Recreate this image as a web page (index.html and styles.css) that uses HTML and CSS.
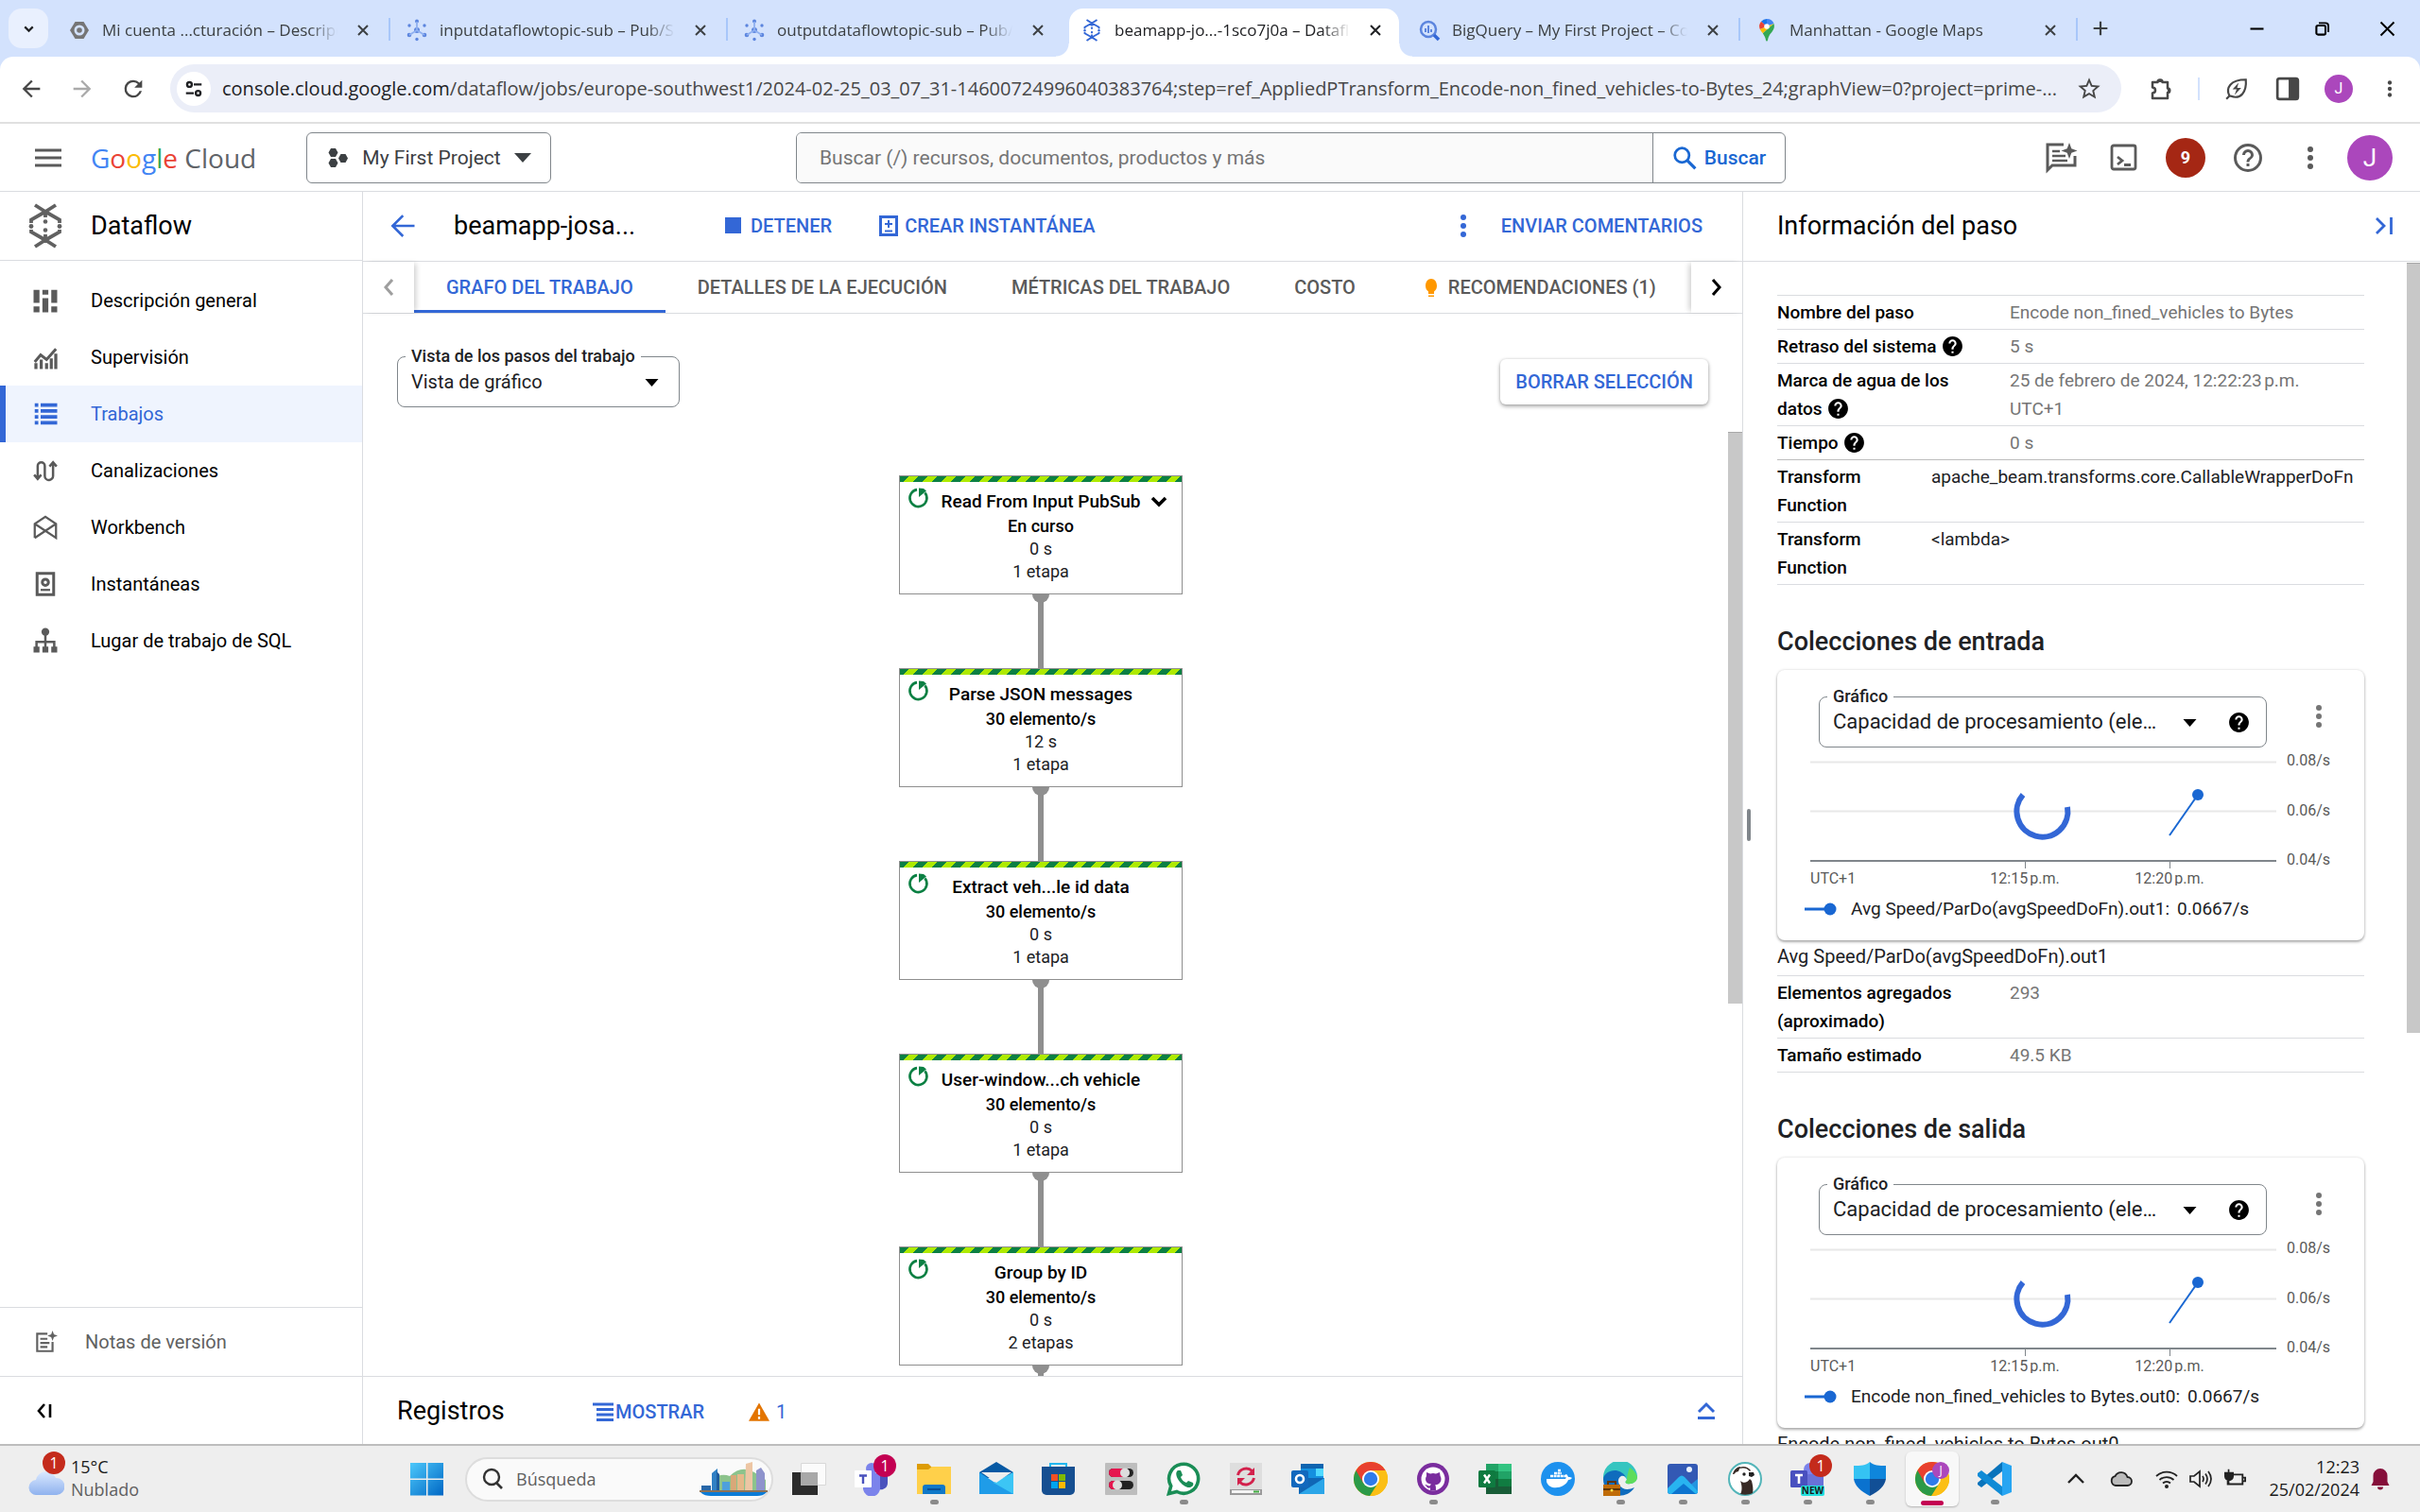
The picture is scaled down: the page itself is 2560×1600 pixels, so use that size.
FILE: index.html
```html
<!DOCTYPE html>
<html lang="es">
<head>
<meta charset="utf-8">
<title>beamapp-jo...-1sco7j0a – Dataflow</title>
<link rel="stylesheet" href="styles.css">
</head>
<body>
<svg class="defs" aria-hidden="true">
  <symbol id="i-x" viewBox="0 0 24 24"><path d="M6 6l12 12M18 6L6 18" fill="none" stroke="currentColor" stroke-width="2.4"/></symbol>
  <symbol id="i-dots" viewBox="0 0 24 24"><circle cx="12" cy="6" r="2"/><circle cx="12" cy="12" r="2"/><circle cx="12" cy="18" r="2"/></symbol>
  <symbol id="i-help" viewBox="0 0 24 24"><path d="M12 2C6.48 2 2 6.48 2 12s4.480 10 10 10 10-4.480 10-10S17.520 2 12 2zm1 17h-2v-2h2v2zm2.070-7.750l-.9.920C13.450 12.900 13 13.500 13 15h-2v-.5c0-1.100.45-2.100 1.170-2.830l1.240-1.260c.37-.36.59-.86.59-1.410 0-1.100-.9-2-2-2s-2 .9-2 2H8c0-2.210 1.790-4 4-4s4 1.790 4 4c0 .88-.36 1.680-.93 2.250z"/></symbol>
  <symbol id="i-pubsub" viewBox="0 0 24 24"><g fill="#5c85de"><circle cx="12" cy="12" r="3"/><circle cx="12" cy="2.500" r="2"/><circle cx="4" cy="17" r="2.300"/><circle cx="20" cy="17" r="2.300"/><circle cx="4" cy="7" r="1.700"/><circle cx="20" cy="7" r="1.700"/><circle cx="12" cy="21.500" r="1.700"/></g><path d="M12 3v9l-8 5m8-5l8 5" stroke="#8fb0f0" stroke-width="1.800" fill="none"/></symbol>
  <symbol id="i-dataflow" viewBox="0 0 36 48"><g fill="none" stroke="currentColor" stroke-width="3.800"><path d="M7 2l11 7 11-7M7 46l11-7 11 7M18 9L3 17.500V21M18 9l15 8.500V21M18 39L3 30.500V28M18 39l15-8.500V28M18 8v7M18 40v-7"/></g><g fill="currentColor"><circle cx="18" cy="19.500" r="2.300"/><circle cx="18" cy="28.500" r="2.300"/><circle cx="3" cy="24.500" r="2.400"/><circle cx="33" cy="24.500" r="2.400"/></g></symbol>
  <symbol id="i-chrome" viewBox="0 0 36 36"><circle cx="18" cy="18" r="18" fill="#fbbc05"/><path d="M18 18L2.400 9A18 18 0 0 0 17 36l9-14z" fill="#2b9a48"/><path d="M18 9h15.600A18 18 0 0 0 2.400 9L10.200 22.500 18 18z" fill="#e8402f"/><path d="M18 9h15.600A18 18 0 0 1 17.500 36l8.300-13.500L18 18z" fill="#fbbf15"/><circle cx="18" cy="18" r="9" fill="#fff"/><circle cx="18" cy="18" r="7.200" fill="#2f7bea"/></symbol>
  <symbol id="i-running" viewBox="0 0 24 24"><path d="M15.500 4.200A9 9 0 1 1 6.500 4.800" transform="rotate(25 12 12)" fill="none" stroke="currentColor" stroke-width="2.600"/><path d="M12 1.500V11l8-6.500-3-2.500z" fill="currentColor"/></symbol>
</svg>

<header class="tabstrip">
  <button class="tabsearch" aria-label="Buscar pestañas"><svg viewBox="0 0 24 24"><path d="M6 9l6 6 6-6" fill="none" stroke="currentColor" stroke-width="3"/></svg></button>
  <nav class="btabs">
    <div class="btab sep"><svg class="fav" viewBox="0 0 24 24"><path d="M7.500 3h9L22 12l-5.500 9h-9L2 12z" fill="#757575"/><circle cx="12" cy="12" r="5.500" fill="#d3e2fd"/><circle cx="12" cy="12" r="2.800" fill="#757575"/></svg><span class="bt">Mi cuenta ...cturación – Descripción</span><button aria-label="Cerrar"><svg><use href="#i-x"/></svg></button></div>
    <div class="btab sep"><svg class="fav"><use href="#i-pubsub"/></svg><span class="bt">inputdataflowtopic-sub – Pub/Sub</span><button aria-label="Cerrar"><svg><use href="#i-x"/></svg></button></div>
    <div class="btab"><svg class="fav"><use href="#i-pubsub"/></svg><span class="bt">outputdataflowtopic-sub – Pub/Sub</span><button aria-label="Cerrar"><svg><use href="#i-x"/></svg></button></div>
    <div class="btab on"><svg class="fav"><use href="#i-dataflow"/></svg><span class="bt">beamapp-jo...-1sco7j0a – Dataflow</span><button aria-label="Cerrar"><svg><use href="#i-x"/></svg></button></div>
    <div class="btab sep"><svg class="fav" viewBox="0 0 24 24"><circle cx="11" cy="11" r="8" fill="none" stroke="#5c85de" stroke-width="2.500"/><path d="M17 17l5 5" stroke="#3367d6" stroke-width="3.500"/><path d="M8 10v4M11 7v8M14 11v3" stroke="#5c85de" stroke-width="2"/></svg><span class="bt">BigQuery – My First Project – Consola</span><button aria-label="Cerrar"><svg><use href="#i-x"/></svg></button></div>
    <div class="btab sep"><svg class="fav" viewBox="0 0 24 24"><path d="M12 0a8 8 0 0 0-6 2.800L12 8z" fill="#1a73e8"/><path d="M6 2.800A8 8 0 0 0 4.800 11L12 8z" fill="#ea4335"/><path d="M12 0a8 8 0 0 1 7.500 5L12 8z" fill="#4285f4"/><path d="M4.800 11c.8 1.700 2 3 3 4.300L19.500 5 12 8z" fill="#fbbc04"/><path d="M19.500 5c1 3 .3 5.500-1.500 8-2 2.600-4 4.500-5 9.500-.3 1.500-1.700 1.500-2 0-.6-3-1.800-5-3.200-7.200z" fill="#34a853"/><circle cx="12" cy="8" r="2.800" fill="#fff"/></svg><span class="bt">Manhattan - Google Maps</span><button aria-label="Cerrar"><svg><use href="#i-x"/></svg></button></div>
  </nav>
  <button class="newtab" aria-label="Nueva pestaña"><svg viewBox="0 0 24 24"><path d="M12 4v16M4 12h16" stroke="currentColor" stroke-width="2.400"/></svg></button>
  <div class="winbtns">
    <button aria-label="Minimizar"><svg viewBox="0 0 24 24"><path d="M4 12h16" stroke="currentColor" stroke-width="2.400"/></svg></button>
    <button aria-label="Restaurar"><svg viewBox="0 0 24 24"><rect x="5" y="8" width="11" height="11" rx="2" fill="none" stroke="currentColor" stroke-width="2.400"/><path d="M8 5h8a3.500 3.500 0 0 1 3.500 3.500V16" fill="none" stroke="currentColor" stroke-width="2.200"/></svg></button>
    <button aria-label="Cerrar ventana"><svg viewBox="0 0 24 24"><path d="M4 4l16 16M20 4L4 20" stroke="currentColor" stroke-width="2.200"/></svg></button>
  </div>
</header>

<div class="toolbar-wrap"><div class="toolbar">
  <button aria-label="Atrás"><svg viewBox="0 0 24 24"><path d="M20 11H7.830l5.590-5.590L12 4l-8 8 8 8 1.410-1.410L7.830 13H20v-2z" fill="currentColor"/></svg></button>
  <button class="dim" aria-label="Adelante"><svg viewBox="0 0 24 24"><path d="M4 11h12.170l-5.590-5.590L12 4l8 8-8 8-1.410-1.410L16.170 13H4v-2z" fill="currentColor"/></svg></button>
  <button aria-label="Recargar"><svg viewBox="0 0 24 24"><path d="M17.650 6.350A7.960 7.960 0 0 0 12 4a8 8 0 1 0 7.730 10h-2.080A6 6 0 1 1 12 6c1.660 0 3.140.69 4.220 1.780L13 11h7V4l-2.350 2.350z" fill="currentColor"/></svg></button>
  <div class="urlbar">
    <button class="tune" aria-label="Información del sitio"><svg viewBox="0 0 24 24"><g fill="none" stroke="currentColor" stroke-width="2.600"><circle cx="7" cy="7" r="2.700"/><path d="M12 7h9M3 17h9"/><circle cx="17" cy="17" r="2.700"/></g></svg></button>
    <span class="url"><b>console.cloud.google.com</b>/dataflow/jobs/europe-southwest1/2024-02-25_03_07_31-14600724996040383764;step=ref_AppliedPTransform_Encode-non_fined_vehicles-to-Bytes_24;graphView=0?project=prime-...</span>
    <button class="star" aria-label="Marcador"><svg viewBox="0 0 24 24"><path d="M22 9.240l-7.190-.62L12 2 9.190 8.630 2 9.240l5.460 4.730L5.820 21 12 17.270 18.180 21l-1.630-7.030L22 9.240zM12 15.400l-3.760 2.270 1-4.280-3.320-2.880 4.380-.38L12 6.100l1.710 4.040 4.380.38-3.320 2.880 1 4.280L12 15.400z" fill="currentColor"/></svg></button>
  </div>
  <div class="ext">
    <button aria-label="Extensiones"><svg viewBox="0 0 26 24"><path d="M4 5h5.500a2.500 2.500 0 0 1 5 0H20v6.500a2 2 0 0 1 0 4.500v6H4v-5.500c4-.5 4-5.500 0-6z" fill="none" stroke="currentColor" stroke-width="2.500" stroke-linejoin="round"/><path d="M9 5a3 3 0 0 1 6 0zM20 11a3 3 0 0 1 0 5.500z" fill="currentColor"/></svg></button>
    <i class="extsep"></i>
    <button aria-label="Ahorro"><svg viewBox="0 0 24 24"><path d="M5 19C1 11 6 3 21 3c1 12-5 20-15 16zM5 19l-3 3" fill="none" stroke="currentColor" stroke-width="2"/><path d="M14 6l-6 6.500h4L10 18l6.500-7h-4z" fill="currentColor"/></svg></button>
    <button aria-label="Panel lateral"><svg viewBox="0 0 24 24"><rect x="2" y="2" width="20" height="20" rx="2" fill="none" stroke="currentColor" stroke-width="2.500"/><path d="M13 2h9v20h-9z" fill="currentColor"/></svg></button>
    <button class="me sm" aria-label="Perfil">J</button>
    <button aria-label="Menú"><svg fill="currentColor"><use href="#i-dots"/></svg></button>
  </div>
</div></div>

<header class="gbar">
  <div class="gleft">
    <button class="burger" aria-label="Menú de navegación"><svg viewBox="0 0 28 20"><path d="M0 2h28M0 10h28M0 18h28" stroke="currentColor" stroke-width="3"/></svg></button>
    <a class="logo" href="#"><span class="g1">G</span><span class="g2">o</span><span class="g3">o</span><span class="g1">g</span><span class="g4">l</span><span class="g2">e</span> Cloud</a>
    <button class="project"><svg class="hex" viewBox="0 0 24 24"><path d="M5 2h5l2.500 4.500L10 11H5L2.500 6.500zM15.500 8h5L23 12.500 20.500 17h-5L13 12.500zM5 13h5l2.500 4.500L10 22H5l-2.500-4.500z" fill="currentColor"/></svg>My First Project<svg class="caret" viewBox="0 0 18 10"><path d="M0 0h18l-9 10z" fill="currentColor"/></svg></button>
  </div>
  <form class="gsearch">
    <input type="search" aria-label="Buscar" placeholder="Buscar (/) recursos, documentos, productos y más">
    <button type="button"><svg viewBox="0 0 24 24"><circle cx="9.500" cy="9.500" r="7" fill="none" stroke="currentColor" stroke-width="2.500"/><path d="M14.500 14.500l8 8" stroke="currentColor" stroke-width="3"/></svg>Buscar</button>
  </form>
  <div class="gright">
    <button aria-label="Gemini"><svg viewBox="0 0 36 36"><path d="M21 4H4v27l5-5h24V16" fill="none" stroke="currentColor" stroke-width="3"/><path d="M9 11h8M9 16h14M9 21h16" stroke="currentColor" stroke-width="2.600"/><path d="M27 2l2.300 6.200 6.200 2.300-6.200 2.300L27 19l-2.300-6.200-6.200-2.300 6.200-2.300z" fill="currentColor"/></svg></button>
    <button aria-label="Cloud Shell"><svg viewBox="0 0 36 36"><rect x="6" y="5" width="25" height="25" rx="2" fill="none" stroke="currentColor" stroke-width="2.800"/><path d="M12 17l5 4-5 4M19 25.500h7" fill="none" stroke="currentColor" stroke-width="2.800"/></svg></button>
    <button class="notif" aria-label="Notificaciones">9</button>
    <button aria-label="Ayuda"><svg viewBox="0 0 24 24"><path d="M11 18h2v-2h-2v2zm1-16a10 10 0 1 0 0 20 10 10 0 0 0 0-20zm0 18a8 8 0 1 1 0-16 8 8 0 0 1 0 16zm0-14a4 4 0 0 0-4 4h2c0-1.100.9-2 2-2s2 .9 2 2c0 2-3 1.750-3 5h2c0-2.250 3-2.500 3-5a4 4 0 0 0-4-4z" fill="currentColor"/></svg></button>
    <button aria-label="Más"><svg fill="currentColor"><use href="#i-dots"/></svg></button>
    <button class="me" aria-label="Cuenta">J</button>
  </div>
</header>

<div class="app">
  <aside class="side">
    <div class="side-head"><svg><use href="#i-dataflow"/></svg><h2>Dataflow</h2></div>
    <nav class="menu">
      <a href="#"><svg viewBox="0 0 24 24"><path d="M2 3h5v11H2zM2 17h5v5H2zM9.500 3h5v4h-5zM9.500 10h5v12h-5zM17 3h5v11h-5zM17 17h5v5h-5z" fill="currentColor"/></svg>Descripción general</a>
      <a href="#"><svg viewBox="0 0 24 24"><path d="M3 16l5-6 5 4 8-9" fill="none" stroke="currentColor" stroke-width="2.400"/><path d="M4 17v5M8.500 14v8M13 17v5M17 13v9M20.800 9v13" stroke="currentColor" stroke-width="2.600"/></svg>Supervisión</a>
      <a href="#" class="on"><svg viewBox="0 0 24 24"><path d="M3 3h3v3H3zM8 3h14v3H8zM3 8h3v3H3zM8 8h14v3H8zM3 13h3v3H3zM8 13h14v3H8zM3 18h3v3H3zM8 18h14v3H8z" fill="currentColor"/></svg>Trabajos</a>
      <a href="#"><svg viewBox="0 0 24 24"><path d="M5.500 18V8a3 3 0 0 1 6 0v8.500a3.500 3.500 0 0 0 7 0V5M2.500 15.500l3 3.500 3-3.500M15.500 8.500l3-3.500 3 3.500" fill="none" stroke="currentColor" stroke-width="2"/></svg>Canalizaciones</a>
      <a href="#"><svg viewBox="0 0 24 24"><path d="M3 21V9l9-6 9 6v12L3 9m18 0L3 21" fill="none" stroke="currentColor" stroke-width="1.800"/></svg>Workbench</a>
      <a href="#"><svg viewBox="0 0 24 24"><rect x="5" y="3" width="14" height="18" fill="none" stroke="currentColor" stroke-width="2.400"/><circle cx="12" cy="10.500" r="2.600" fill="none" stroke="currentColor" stroke-width="2.400"/><path d="M8 17h8" stroke="currentColor" stroke-width="1.800"/></svg>Instantáneas</a>
      <a href="#"><svg viewBox="0 0 24 24"><circle cx="12" cy="4.500" r="3.300" fill="currentColor"/><path d="M12 5v14M4.500 19v-6h15v6" fill="none" stroke="currentColor" stroke-width="2"/><path d="M2 17h5v5H2zM9.500 17h5v5h-5zM17 17h5v5h-5z" fill="currentColor"/></svg>Lugar de trabajo de SQL</a>
    </nav>
    <a class="notes" href="#"><svg viewBox="0 0 24 24"><path d="M14 4H4v17h15V12" fill="none" stroke="currentColor" stroke-width="2"/><path d="M7 9h7M7 13h9M7 17h7" stroke="currentColor" stroke-width="2"/><path d="M19 1l1.300 3.700L24 6l-3.700 1.300L19 11l-1.300-3.700L14 6l3.700-1.300z" fill="currentColor"/></svg>Notas de versión</a>
    <div class="collapse"><button aria-label="Contraer"><svg viewBox="0 0 18 18"><path d="M9 2L3 9l6 7M15 2v14" fill="none" stroke="currentColor" stroke-width="2.600"/></svg></button></div>
  </aside>

  <main class="main">
    <div class="actions">
      <button class="back" aria-label="Volver"><svg viewBox="0 0 24 24"><path d="M22 11H6l7-7-1.500-1.500L2 12l9.500 9.500L13 20l-7-7h16z" fill="currentColor"/></svg></button>
      <h1>beamapp-josa...</h1>
      <button class="txt stop"><i class="square"></i>DETENER</button>
      <button class="txt"><svg viewBox="0 0 20 22"><rect x="1.500" y="1.500" width="17" height="19" fill="none" stroke="currentColor" stroke-width="3"/><path d="M10 5v8M6 9h8M6 16.500h8" stroke="currentColor" stroke-width="2"/></svg>CREAR INSTANTÁNEA</button>
      <button class="more" aria-label="Más acciones"><svg fill="currentColor"><use href="#i-dots"/></svg></button>
      <button class="txt">ENVIAR COMENTARIOS</button>
    </div>
    <div class="tabs">
      <button class="edge l" aria-label="Anterior"><svg viewBox="0 0 12 20"><path d="M10 2L3 10l7 8" fill="none" stroke="currentColor" stroke-width="3"/></svg></button>
      <div class="tablist" role="tablist">
        <button role="tab" class="on">GRAFO DEL TRABAJO</button>
        <button role="tab">DETALLES DE LA EJECUCIÓN</button>
        <button role="tab">MÉTRICAS DEL TRABAJO</button>
        <button role="tab">COSTO</button>
        <button role="tab"><svg viewBox="0 0 24 24"><path d="M9 22h6v-1.500H9zM9 19h6v-2.500c2-1.500 3-3.500 3-6C18 6 15.500 3 12 3S6 6 6 10.500c0 2.500 1 4.500 3 6z" fill="#ff9800"/></svg>RECOMENDACIONES (1)</button>
      </div>
      <button class="edge r" aria-label="Siguiente"><svg viewBox="0 0 12 20"><path d="M2 2l7 8-7 8" fill="none" stroke="currentColor" stroke-width="3"/></svg></button>
    </div>
    <div class="viewbar">
      <div class="field view"><label for="view">Vista de los pasos del trabajo</label><select id="view"><option>Vista de gráfico</option></select><svg class="caret" viewBox="0 0 14 8"><path d="M0 0h14L7 8z"/></svg></div>
      <button class="clear">BORRAR SELECCIÓN</button>
    </div>
    <div class="graphwrap">
      <div class="graph">
        <div class="node"><svg class="st"><use href="#i-running"/></svg><h3>Read From Input PubSub<svg class="exp" viewBox="0 0 20 14"><path d="M3 3l7 7 7-7" fill="none" stroke="currentColor" stroke-width="3.500"/></svg></h3><b>En curso</b><span>0 s</span><span>1 etapa</span></div><i class="link"></i>
        <div class="node"><svg class="st"><use href="#i-running"/></svg><h3>Parse JSON messages</h3><b>30 elemento/s</b><span>12 s</span><span>1 etapa</span></div><i class="link"></i>
        <div class="node"><svg class="st"><use href="#i-running"/></svg><h3>Extract veh...le id data</h3><b>30 elemento/s</b><span>0 s</span><span>1 etapa</span></div><i class="link"></i>
        <div class="node"><svg class="st"><use href="#i-running"/></svg><h3>User-window...ch vehicle</h3><b>30 elemento/s</b><span>0 s</span><span>1 etapa</span></div><i class="link"></i>
        <div class="node"><svg class="st"><use href="#i-running"/></svg><h3>Group by ID</h3><b>30 elemento/s</b><span>0 s</span><span>2 etapas</span></div><i class="link"></i>
      </div>
      <i class="sbar"></i>
    </div>
    <div class="logs">
      <h2>Registros</h2>
      <button class="txt show"><svg viewBox="0 0 22 20"><path d="M0 2h22M4 7.500h18M4 13h18M4 18.500h18" stroke="currentColor" stroke-width="3"/></svg>MOSTRAR</button>
      <a class="warn" href="#"><svg viewBox="0 0 24 21"><path d="M12 0l12 21H0z" fill="#e37400"/><path d="M12 7v7M12 16v3" stroke="#fff" stroke-width="2.400"/></svg>1</a>
      <button class="up" aria-label="Expandir"><svg viewBox="0 0 20 20"><path d="M2 11l8-8 8 8M1 17.500h18" fill="none" stroke="currentColor" stroke-width="3"/></svg></button>
    </div>
  </main>

  <section class="panel">
    <div class="phead"><h2>Información del paso</h2><button aria-label="Ocultar panel"><svg viewBox="0 0 20 20"><path d="M2 2l8 8-8 8M17.500 1v18" fill="none" stroke="currentColor" stroke-width="2.800"/></svg></button></div>
    <div class="pbody">
      <i class="grip"></i>
      <div class="pcontent">
        <table>
          <tr><th>Nombre del paso</th><td>Encode non_fined_vehicles to Bytes</td></tr>
          <tr><th>Retraso del sistema <svg class="q"><use href="#i-help"/></svg></th><td>5 s</td></tr>
          <tr><th>Marca de agua de los datos <svg class="q"><use href="#i-help"/></svg></th><td>25 de febrero de 2024, 12:22:23&#8239;p.m. UTC+1</td></tr>
          <tr><th>Tiempo <svg class="q"><use href="#i-help"/></svg></th><td>0 s</td></tr>
        </table>
        <table class="fn">
          <tr><th>Transform Function</th><td>apache_beam.transforms.core.CallableWrapperDoFn</td></tr>
          <tr><th>Transform Function</th><td>&lt;lambda&gt;</td></tr>
        </table>

        <h2>Colecciones de entrada</h2>
        <div class="card">
          <div class="cardtop">
            <div class="field metric"><label for="m1">Gráfico</label><select id="m1"><option>Capacidad de procesamiento (ele…</option></select><svg class="caret" viewBox="0 0 14 8"><path d="M0 0h14L7 8z"/></svg><svg class="q"><use href="#i-help"/></svg></div>
            <button class="dots" aria-label="Opciones"><svg fill="currentColor"><use href="#i-dots"/></svg></button>
          </div>
          <svg class="chart" viewBox="0 0 600 146">
            <g fill="none"><path d="M16 15.500h493M16 67.500h493" stroke="#e8e8e8" stroke-width="2"/><path d="M16 120h493" stroke="#80868b" stroke-width="2"/><path d="M243.500 121v7M396.500 121v7" stroke="#80868b"/></g>
            <path d="M241 50A27 27 0 1 0 288 63" fill="none" stroke="#3367d6" stroke-width="6"/>
            <path d="M396 93l30-43" stroke="#1967d2" stroke-width="2"/><circle cx="426" cy="50" r="6" fill="#1967d2"/>
            <g class="lbl"><text x="520" y="19">0.08/s</text><text x="520" y="72">0.06/s</text><text x="520" y="124">0.04/s</text><text x="16" y="144">UTC+1</text><text x="243" y="144" text-anchor="middle">12:15&#8239;p.m.</text><text x="396" y="144" text-anchor="middle">12:20&#8239;p.m.</text></g>
          </svg>
          <div class="legend"><svg viewBox="0 0 34 14"><path d="M0 7h22" stroke="#1967d2" stroke-width="3"/><circle cx="27" cy="7" r="6.500" fill="#1967d2"/></svg><span>Avg Speed/ParDo(avgSpeedDoFn).out1:</span><span>0.0667/s</span></div>
        </div>
        <p>Avg Speed/ParDo(avgSpeedDoFn).out1</p>
        <table>
          <tr><th>Elementos agregados (aproximado)</th><td>293</td></tr>
          <tr><th>Tamaño estimado</th><td>49.5 KB</td></tr>
        </table>

        <h2>Colecciones de salida</h2>
        <div class="card">
          <div class="cardtop">
            <div class="field metric"><label for="m2">Gráfico</label><select id="m2"><option>Capacidad de procesamiento (ele…</option></select><svg class="caret" viewBox="0 0 14 8"><path d="M0 0h14L7 8z"/></svg><svg class="q"><use href="#i-help"/></svg></div>
            <button class="dots" aria-label="Opciones"><svg fill="currentColor"><use href="#i-dots"/></svg></button>
          </div>
          <svg class="chart" viewBox="0 0 600 146">
            <g fill="none"><path d="M16 15.500h493M16 67.500h493" stroke="#e8e8e8" stroke-width="2"/><path d="M16 120h493" stroke="#80868b" stroke-width="2"/><path d="M243.500 121v7M396.500 121v7" stroke="#80868b"/></g>
            <path d="M241 50A27 27 0 1 0 288 63" fill="none" stroke="#3367d6" stroke-width="6"/>
            <path d="M396 93l30-43" stroke="#1967d2" stroke-width="2"/><circle cx="426" cy="50" r="6" fill="#1967d2"/>
            <g class="lbl"><text x="520" y="19">0.08/s</text><text x="520" y="72">0.06/s</text><text x="520" y="124">0.04/s</text><text x="16" y="144">UTC+1</text><text x="243" y="144" text-anchor="middle">12:15&#8239;p.m.</text><text x="396" y="144" text-anchor="middle">12:20&#8239;p.m.</text></g>
          </svg>
          <div class="legend"><svg viewBox="0 0 34 14"><path d="M0 7h22" stroke="#1967d2" stroke-width="3"/><circle cx="27" cy="7" r="6.500" fill="#1967d2"/></svg><span>Encode non_fined_vehicles to Bytes.out0:</span><span>0.0667/s</span></div>
        </div>
        <p>Encode non_fined_vehicles to Bytes.out0</p>
      </div>
      <i class="sbar"></i>
    </div>
  </section>
</div>

<footer class="taskbar">
  <div class="weather">
    <div class="wicon"><svg viewBox="0 0 38 26"><defs><linearGradient id="cl" x1="0" y1="0" x2="0" y2="1"><stop offset="0" stop-color="#dbe9ff"/><stop offset="1" stop-color="#8fb2ee"/></linearGradient></defs><path d="M9 26a8 8 0 0 1-1-16 11 11 0 0 1 21-2 9 9 0 0 1 1 18z" fill="url(#cl)"/></svg><b class="badge red">1</b></div>
    <div class="wtext"><span>15°C</span><span class="sub">Nublado</span></div>
  </div>
  <div class="apps">
    <button class="app-i" aria-label="Inicio"><svg viewBox="0 0 36 36"><defs><linearGradient id="wn" x1="0" y1="0" x2="1" y2="1"><stop offset="0" stop-color="#4cc8fb"/><stop offset="1" stop-color="#0067c4"/></linearGradient></defs><path d="M0 1h17v16.500H0zM18.500 1H35v16.500H18.500zM0 19h17v16.500H0zM18.500 19H35v16.500H18.500z" fill="url(#wn)"/></svg></button>
    <label class="tsearch"><svg viewBox="0 0 24 24"><circle cx="11" cy="10" r="8" fill="none" stroke="#333" stroke-width="2.400"/><path d="M16 16l6 6" stroke="#333" stroke-width="2.600"/></svg><input type="text" placeholder="Búsqueda" aria-label="Búsqueda">
      <svg class="city" viewBox="0 0 72 38"><path d="M14 20Q22 12 32 16 44 4 58 12l12 8v12H14z" fill="#8cc38c"/><path d="M2 26h10v7H2z" fill="#2767a8"/><path d="M13 13l6-5v25h-6z" fill="#2f80c4"/><path d="M18 11l3 3v19h-3z" fill="#1f5c9c"/><path d="M24 22h8v11h-8z" fill="#4ea0dc"/><path d="M33 15h6v18h-6z" fill="#d8a878"/><path d="M40 14h7v19h-7z" fill="#e6b98a"/><path d="M49 3l7-2v32h-8z" fill="#edc6a4"/><path d="M60 10l5-3 4 6v20h-9z" fill="#8e93cc"/><path d="M0 31h72v2H0z" fill="#8d7257"/><path d="M1 33h70c-3 3-6 4-10 4H12c-4 0-8-1-11-4z" fill="#0b7bd6"/></svg></label>
    <button class="app-i" aria-label="Vista de tareas"><svg viewBox="0 0 36 36"><path d="M0 11h27v24H0z" fill="#2b2b2b"/><path d="M9.500 1.500h26v23h-26z" fill="#fbfbfb" stroke="#d8d8d8"/><path d="M9 11h18v14H9z" fill="#a8a8a8"/></svg></button>
    <button class="app-i" aria-label="Teams"><svg viewBox="0 0 36 36"><circle cx="18" cy="7" r="6" fill="#7b83eb"/><path d="M26 12h9v10a7 7 0 0 1-9 7z" fill="#4a52bd"/><path d="M9 12h18v14a9 9 0 0 1-18 3z" fill="#7b83eb"/><rect y="9" width="18" height="18" rx="1" fill="#fff"/><path d="M5 14.500h8M9 14v9" stroke="#4a52bd" stroke-width="2.400"/></svg><b class="badge pink">1</b></button>
    <button class="app-i run" aria-label="Explorador"><svg viewBox="0 0 36 36"><path d="M0 2h12l4 4v5H0z" fill="#dd9c07"/><path d="M0 8h12l4-3h20v29H0z" fill="#ffd04a"/><path d="M6 34V27q0-3 3-3h18q3 0 3 3v7z" fill="#0f78c8"/><path d="M11 29h14" stroke="#084f96" stroke-width="2"/></svg></button>
    <button class="app-i" aria-label="Correo"><svg viewBox="0 0 36 36"><path d="M0 11L18 0l18 11v6H0z" fill="#0759a4"/><path d="M0 11l18 12 18-12v23H0z" fill="#1f9ce8"/><path d="M36 11v23L15 22z" fill="#3cc5f5"/><path d="M2 11h32L18 22z" fill="#eee"/></svg></button>
    <button class="app-i" aria-label="Store"><svg viewBox="0 0 36 36"><path d="M9 8V2h17v6" fill="none" stroke="#22b8f0" stroke-width="2"/><path d="M0 5h35v25a5 5 0 0 1-5 5H5a5 5 0 0 1-5-5z" fill="#164f91"/><path d="M10 13h7v7h-7z" fill="#f25022"/><path d="M18 13h7v7h-7z" fill="#7fba00"/><path d="M10 21h7v7h-7z" fill="#00a4ef"/><path d="M18 21h7v7h-7z" fill="#ffb900"/></svg></button>
    <button class="app-i" aria-label="Ajustes de audio"><svg viewBox="0 0 36 36"><rect x="1" y="1" width="34" height="34" rx="1" fill="#bdbdbd"/><rect x="5" y="7" width="26" height="9" rx="4.500" fill="#222"/><path d="M9.500 7H20v9H9.500a4.500 4.500 0 0 1 0-9z" fill="#e6164f"/><circle cx="22" cy="11.500" r="5" fill="#ddd"/><rect x="5" y="20" width="26" height="9" rx="4.500" fill="#222"/><path d="M9.500 20H14v9H9.500a4.500 4.500 0 0 1 0-9z" fill="#e6164f"/><circle cx="14" cy="24.500" r="5" fill="#ddd"/></svg></button>
    <button class="app-i run" aria-label="WhatsApp"><svg viewBox="0 0 36 36"><path d="M2.500 33.500l2.200-8A15.500 15.500 0 1 1 11 31.500z" fill="#fff" stroke="#1a8d56" stroke-width="3.600"/><path d="M12 9c-6 4 5 19 13 18 3-1 4-3 3-5l-5-2-2 2c-3-1-5-3-6-6l2-2-2-5z" fill="#1a8d56"/></svg></button>
    <button class="app-i" aria-label="Sincronizar"><svg viewBox="0 0 36 36"><rect x="1" y="1" width="34" height="34" fill="#dedede"/><path d="M1 29h34v6H1z" fill="#999"/><path d="M3 30h30v3H3z" fill="#f4f4f4"/><path d="M26 30.500h6v2h-6z" fill="#3ea83e"/><path d="M9.500 14a9 9 0 0 1 15-4.500M26.500 17a9 9 0 0 1-15 4.500" fill="none" stroke="#d3214c" stroke-width="3"/><path d="M27 6v8h-8zM9 25v-8h8z" fill="#d3214c"/></svg></button>
    <button class="app-i" aria-label="Outlook"><svg viewBox="0 0 36 36"><path d="M10 2h24v16H10z" fill="#1490df"/><path d="M18 2h16v5H10V2z" fill="#0f64b0"/><path d="M26 7h8v8h-8z" fill="#50d9ff"/><path d="M8 17l27 0v17H8z" fill="#1066b5"/><path d="M35 17v17H8z" fill="#2ba5e8"/><rect y="9" width="18" height="18" rx="2" fill="#1268bd"/><circle cx="9" cy="18" r="4" fill="none" stroke="#fff" stroke-width="2.600"/></svg></button>
    <button class="app-i" aria-label="Chrome"><svg><use href="#i-chrome"/></svg></button>
    <button class="app-i run" aria-label="GitHub"><svg viewBox="0 0 36 36"><circle cx="18" cy="18" r="17" fill="#7a2d9e"/><circle cx="18" cy="18" r="12.500" fill="#fff"/><path d="M11 11l4 1.500a12 12 0 0 1 6 0l4-1.500.6 4c2 3 1 9-5.600 9.500 1 1 1 2 1 6h-6v-3c-4 1-4-3-6-3.500 3-.5 3 2 6 1.300 0-.8.300-1.300 1-1.800-6-.5-7-5.500-5-8.500z" fill="#7a2d9e"/></svg></button>
    <button class="app-i" aria-label="Excel"><svg viewBox="0 0 36 36"><path d="M8 2h13v8H8z" fill="#21a366"/><path d="M21 2h14v8H21z" fill="#33c481"/><path d="M8 10h27v8H8z" fill="#107c41"/><path d="M21 10h14v8H21z" fill="#21a366"/><path d="M8 18h27v16H8z" fill="#185c37"/><path d="M21 18h14v8H21z" fill="#107c41"/><rect y="9" width="18" height="18" rx="1.500" fill="#0e7a40"/><path d="M6 13.500l6 9M12 13.500l-6 9" stroke="#fff" stroke-width="2.400"/></svg></button>
    <button class="app-i" aria-label="Docker"><svg viewBox="0 0 36 36"><circle cx="18" cy="18" r="18" fill="#1d91ee"/><path d="M6 18h20c1-1 1-3 0-5 2 0 2 1 3 3 2 0 3 0 4 1-1 1-2 2-4 2-3 9-20 12-23 2z" fill="#fff"/><path d="M10 15h17M14 12h8M18 9h3" stroke="#fff" stroke-width="2.600" stroke-dasharray="3 .6"/></svg></button>
    <button class="app-i run" aria-label="Edge"><svg viewBox="0 0 36 36"><path d="M0 18A18 18 0 0 1 36 15c0 6-5 9-11 8-2-1-2-2 0-4-3-8-17-9-25-1z" fill="#36c5c0"/><path d="M28 6a18 18 0 0 1 8 10c0 5-5 8-11 7-2-1-2-2 0-4 0-4 1-8 3-13z" fill="#5fdc5c"/><path d="M0 18c1-9 17-14 24-2-6-4-10 3-7 8 3 6 10 6 16 3-5 8-14 10-21 8C4 33 0 26 0 18z" fill="#0f6cbd"/><path d="M0 24h18v12H0z" fill="#c06c08"/><path d="M5 24v-3h8v3M0 29h18" fill="none" stroke="#5f3405" stroke-width="2"/><circle cx="9" cy="30" r="1.500" fill="#ffe14a"/></svg></button>
    <button class="app-i run" aria-label="Fotos"><svg viewBox="0 0 36 36"><rect x="2" y="2" width="32" height="32" rx="3" fill="#3359b4"/><path d="M14 34l20-16v13q0 3-3 3z" fill="#2495e0"/><path d="M2 28L14 16q3-3 6 0l14 15v1q-1 2-3 2H5q-3 0-3-3z" fill="#28b4f0"/><path d="M6 34l13-11 13 11z" fill="#0d74cf"/><circle cx="25" cy="8" r="3" fill="#e8f2ff"/></svg></button>
    <button class="app-i run" aria-label="DBeaver"><svg viewBox="0 0 36 36"><circle cx="18" cy="18" r="17" fill="#fff" stroke="#53b5b9" stroke-width="2"/><path d="M5 13c1-5 5-8 8-8l-2 5-3 1c-1 2-2 2-3 2zM12 6c4-2 9-1 12 3l-1 1c-3-4-7-4-11-3z" fill="#382a25"/><path d="M13 20c3 3 8 2 10-2l2 2c1 4 2 9 1 13-4 2-9 2-13 1 2-3 2-9 0-14z" fill="#382a25"/><circle cx="17" cy="13" r="1.700" fill="#222"/><path d="M22 11h5l1 3-3 2-3-1z" fill="#222"/></svg></button>
    <button class="app-i run" aria-label="Teams nuevo"><svg viewBox="0 0 36 36"><circle cx="21" cy="8" r="7" fill="#7b83eb"/><path d="M14 13h21v14H14z" fill="#6a72d8"/><rect y="9" width="18" height="18" rx="1.500" fill="#4950bf"/><path d="M5 14h8M9 14v9" stroke="#fff" stroke-width="2.600"/></svg><b class="badge red">1</b><b class="new">NEW</b></button>
    <button class="app-i run" aria-label="Seguridad"><svg viewBox="0 0 36 36"><path d="M18 0c4 4 10 4 17 4v14H18z" fill="#0f86dc"/><path d="M18 0C14 4 8 4 1 4v14h17z" fill="#35c3f3"/><path d="M1 18h17v18C8 31 2 25 1 18z" fill="#0a72cf"/><path d="M35 18H18v18c10-5 16-11 17-18z" fill="#114f96"/></svg></button>
    <button class="app-i active" aria-label="Chrome activo"><svg><use href="#i-chrome"/></svg><b class="jbadge">J</b></button>
    <button class="app-i run" aria-label="VS Code"><svg viewBox="0 0 36 36"><path d="M26 0v10L4 27l-4-3v-2z" fill="#0873bb"/><path d="M0 12l4-3 22 17v10L0 15z" fill="#0f8bd6"/><path d="M26 0l10 4v28l-10 4z" fill="#27a5f2"/></svg></button>
  </div>
  <div class="tray">
    <svg viewBox="0 0 24 24"><path d="M4 16l8-8 8 8" fill="none" stroke="#222" stroke-width="2.400"/></svg>
    <svg viewBox="0 0 24 24"><path d="M6 19a5 5 0 0 1-.5-9.800A7 7 0 0 1 18.500 10a4.500 4.500 0 0 1 0 9z" fill="#bbb" stroke="#222" stroke-width="1.800"/></svg>
    <div class="net">
    <svg viewBox="0 0 24 24"><path d="M1 9a16 16 0 0 1 22 0M4.500 13a11 11 0 0 1 15 0M8 16.500a6 6 0 0 1 8 0" fill="none" stroke="#222" stroke-width="1.800"/><circle cx="12" cy="20" r="2" fill="#222"/></svg>
    <svg viewBox="0 0 24 24"><path d="M1 9h4l6-5v16l-6-5H1zM14 9q2 3 0 6M17 6.500q4 5.500 0 11M20 4q6 8 0 16" fill="none" stroke="#222" stroke-width="1.700"/></svg>
    <svg viewBox="0 0 26 24"><path d="M11 7h11v11H5v-4M22 10.500h3v4h-3" fill="none" stroke="#222" stroke-width="2"/><path d="M6 1v4M2 5h9v4a4.500 4.500 0 0 1-9 0zM6 12v6" fill="#222" stroke="#222" stroke-width="1.800"/></svg>
    </div>
    <div class="clock"><span>12:23</span><span>25/02/2024</span></div>
    <svg class="bell" viewBox="0 0 24 24"><path d="M12 1a7.500 7.500 0 0 0-7.500 7.500V15L2.500 19h19l-2-4V8.500A7.500 7.500 0 0 0 12 1zM9 20.500h6a3 3 0 0 1-6 0z" fill="#850f3a"/></svg>
  </div>
</footer>
</body>
</html>
```
FILE: styles.css
```css
* { box-sizing: border-box; }
html, body { margin: 0; height: 100%; }
body {
  display: flex; flex-direction: column; min-height: 100vh; overflow: hidden;
  font: 400 20px/30px Roboto, "Liberation Sans", sans-serif; color: #000; background: #fff;
}
button { font: inherit; color: inherit; background: none; border: 0; padding: 0; margin: 0; display: inline-flex; align-items: center; justify-content: center; }
a { color: inherit; text-decoration: none; }
h1, h2, h3, p { margin: 0; font-weight: 400; }
svg { display: block; flex: none; }
i { display: block; font-style: normal; }
.defs { position: absolute; width: 0; height: 0; }

/* browser chrome */
.tabstrip { flex: none; display: flex; height: 60px; padding-left: 9px; background: #d3e2fd; font-family: "Open Sans", "Noto Sans", sans-serif; font-size: 17px; color: #3c4043; }
.tabsearch { flex: none; width: 42px; height: 42px; margin: 9px 5px 0 0; border-radius: 14px; background: #e9f0fe; color: #202124; }
.tabsearch svg { width: 17px; height: 17px; }
.btabs { display: flex; flex: 0 1 2142px; min-width: 0; }
.btab { position: relative; flex: 1 1 0; min-width: 0; display: flex; align-items: center; gap: 12px; padding: 3px 17px 0 16px; }
.btab.sep::after { content: ""; position: absolute; right: 0; top: 19px; width: 2px; height: 24px; background: #a8c7fa; }
.btab .fav { width: 24px; height: 24px; color: #3367d6; }
.btab.on > * { z-index: 1; }
.btab.on { color: #202124; }
.btab.on::before { content: ""; position: absolute; z-index: 0; left: 4px; right: 4px; top: 9px; bottom: 0; border-radius: 15px 15px 0 0; background: #fff; }
.btab.on::after { content: ""; position: absolute; left: -10px; right: -10px; bottom: 0; height: 14px; background: radial-gradient(circle at 0 0, transparent 13px, #fff 14px) left / 14px 14px no-repeat, radial-gradient(circle at 100% 0, transparent 13px, #fff 14px) right / 14px 14px no-repeat; }
.bt { flex: 1; white-space: nowrap; overflow: hidden; -webkit-mask-image: linear-gradient(to right, #000 calc(100% - 30px), transparent); mask-image: linear-gradient(to right, #000 calc(100% - 30px), transparent); }
.btab button { width: 24px; height: 24px; margin-left: 3px; }
.btab button svg { width: 20px; height: 20px; }
.newtab { width: 48px; }
.newtab svg { width: 22px; height: 22px; }
.winbtns { display: flex; margin-left: auto; color: #000; }
.winbtns button { width: 69px; }
.winbtns svg { width: 21px; height: 21px; }
.toolbar-wrap { flex: none; background: #d3e2fd; }
.toolbar { display: flex; align-items: center; height: 71px; padding: 0 5px 2px 6px; background: #fff; border-radius: 14px 14px 0 0; border-bottom: 2px solid #e0e0e0; color: #474747; }
.toolbar > button { width: 54px; }
.toolbar > button svg { width: 28px; height: 28px; }
.toolbar .dim { color: #aaa; }
.urlbar { flex: 1; min-width: 0; display: flex; align-items: center; height: 51px; margin-left: 12px; padding: 0 20px 0 7px; border-radius: 26px; background: #ebeef8; }
.tune { flex: none; width: 36px; height: 36px; border-radius: 50%; background: #fff; color: #202124; }
.tune svg { width: 22px; height: 22px; }
.url { flex: 1; min-width: 0; margin-left: 12px; white-space: nowrap; overflow: hidden; font-family: "Open Sans", "Noto Sans", sans-serif; font-size: 20px; color: #474747; }
.url b { font-weight: 400; color: #202124; }
.star svg { width: 28px; height: 28px; }
.ext { flex: none; display: flex; align-items: center; padding-left: 15px; }
.ext button { width: 54px; }
.ext svg { width: 26px; height: 26px; }
.extsep { width: 2px; height: 24px; margin: 0 12px; background: #d3e2fd; }
.me { width: 48px; height: 48px; border-radius: 50%; background: #ab47bc; color: #fff; font-size: 26px; }
.ext .me.sm { width: 30px; height: 30px; margin: 0 12px; font-size: 16px; }

/* console header */
.gbar { flex: none; display: flex; align-items: center; height: 72px; border-bottom: 1px solid #dadce0; }
.gleft { flex: 0 0 842px; display: flex; align-items: center; padding-left: 37px; }
.burger { color: #5a5a5a; }
.burger svg { width: 28px; height: 20px; }
.logo { margin-left: 31px; width: 228px; font: 400 28px/36px "Open Sans", Roboto, sans-serif; color: #5f6368; white-space: nowrap; }
.g1 { color: #4285f4; } .g2 { color: #ea4335; } .g3 { color: #fbbc04; } .g4 { color: #34a853; }
.project { width: 259px; height: 54px; padding: 0 20px; border: 1px solid #80868b; border-radius: 6px; color: #3c4043; font-size: 21px; justify-content: space-between; }
.project .hex { width: 24px; height: 24px; }
.project .caret { width: 18px; height: 10px; }
.gsearch { flex: 1; display: flex; height: 54px; margin: 0; border: 1px solid #80868b; border-radius: 6px; overflow: hidden; }
.gsearch input { flex: 1; min-width: 0; border: 0; border-right: 1px solid #80868b; padding: 0 24px; background: #fafafa; font: inherit; font-size: 21px; outline: 0; }
.gsearch input::placeholder { color: #757575; opacity: 1; }
.gsearch button { width: 139px; gap: 8px; color: #1967d2; font-size: 21px; font-weight: 500; }
.gsearch svg { width: 26px; height: 26px; }
.gright { flex: 0 0 671px; display: flex; align-items: center; justify-content: flex-end; gap: 30px; padding-right: 29px; color: #5a5a5a; }
.gright button { width: 36px; height: 36px; }
.gright svg { width: 36px; height: 36px; }
.gright .notif { width: 42px; height: 42px; margin: 0 -3px; border-radius: 50%; background: #a52714; color: #fff; font-size: 18px; font-weight: 700; }
.gright .me { width: 48px; height: 48px; margin-left: -9px; }

/* app layout */
.app { flex: 1; min-height: 0; display: grid; grid-template-columns: 384px minmax(0, 1fr) 717px; }
.side { display: flex; flex-direction: column; border-right: 1px solid #dadce0; }
.side-head { display: flex; align-items: center; gap: 30px; height: 73px; padding-left: 30px; border-bottom: 1px solid #dadce0; }
.side-head svg { width: 36px; height: 48px; color: #616161; }
h1, .side-head h2, .phead h2, .pcontent h2, .logs h2 { font-size: 27px; line-height: 36px; }
.menu { flex: 1; padding-top: 12px; }
.menu a { display: flex; align-items: center; gap: 33px; height: 60px; padding-left: 33px; }
.menu svg { width: 30px; height: 30px; color: #5a5a5a; }
.menu a.on { padding-left: 27px; border-left: 6px solid #3367d6; background: #eff4fe; color: #3367d6; }
.menu a.on svg { color: #3367d6; }
.notes { display: flex; align-items: center; gap: 29px; height: 73px; padding-left: 35px; border-top: 1px solid #dadce0; color: #616161; }
.notes svg { width: 26px; height: 26px; }
.collapse { display: flex; align-items: center; height: 72px; padding-left: 38px; border-top: 1px solid #dadce0; }
.collapse svg { width: 18px; height: 18px; }

.main { display: flex; flex-direction: column; min-height: 0; }
.actions { flex: none; display: flex; align-items: center; height: 74px; padding: 0 42px 2px 27px; border-bottom: 1px solid #dadce0; }
.txt, .more, .back, .clear, .up { color: #3367d6; }
.txt { gap: 7px; font-weight: 500; white-space: nowrap; }
.back svg { width: 30px; height: 30px; }
.actions h1 { width: 287px; margin-left: 39px; }
.actions .stop { gap: 10px; margin-right: 50px; }
.square { width: 17px; height: 17px; background: #3367d6; }
.actions .txt svg { width: 20px; height: 22px; }
.more { margin-left: auto; margin-right: 22px; }
.more svg { width: 36px; height: 36px; }
.tabs { flex: none; display: flex; height: 55px; border-bottom: 1px solid #dadce0; }
.edge { flex: 0 0 54px; z-index: 1; }
.edge.l { color: #9e9e9e; box-shadow: 4px 0 6px -2px rgba(0, 0, 0, .2); }
.edge.r { box-shadow: -4px 0 6px -2px rgba(0, 0, 0, .2); }
.edge svg { width: 12px; height: 20px; }
.tablist { flex: 1; min-width: 0; overflow: hidden; display: flex; }
.tablist button { flex: none; padding: 0 34px; gap: 6px; font-weight: 500; color: #5a5a5a; white-space: nowrap; }
.tablist .on { color: #3367d6; box-shadow: inset 0 -3px #3367d6; }
.tablist svg { width: 24px; height: 24px; }
.viewbar { flex: none; display: flex; align-items: flex-start; justify-content: space-between; padding: 45px 36px 26px; }
.field { position: relative; height: 54px; border: 1px solid #80868b; border-radius: 8px; }
.field label { position: absolute; left: 8px; top: -13px; padding: 0 6px; line-height: 24px; background: #fff; font-size: 18px; font-weight: 500; color: #202124; }
.field select { appearance: none; width: 100%; height: 52px; padding: 0 14px; border: 0; background: none; font: inherit; color: #202124; }
.field .caret { position: absolute; top: 23px; right: 21px; width: 15px; height: 8px; pointer-events: none; }
.view { width: 299px; }
.clear { height: 48px; margin-top: 3px; padding: 0 16px; border-radius: 6px; font-weight: 500; box-shadow: 0 2px 4px rgba(0, 0, 0, .35), 0 0 3px rgba(0, 0, 0, .12); }
.graphwrap { flex: 1; min-height: 0; display: flex; overflow: hidden; }
.graph { flex: 1; display: flex; flex-direction: column; align-items: center; padding: 46px 10px 0 0; }
.node { position: relative; flex: none; width: 300px; height: 126px; padding-top: 13px; border: 1px solid #8f8f8f; text-align: center; line-height: 24px; font-size: 18px; color: #202124; }
.node::before { content: ""; position: absolute; left: 0; right: 0; top: 0; height: 6px; background: repeating-linear-gradient(135deg, #0b8043 0 7px, #aeea00 7px 14px); }
.node h3 { font-size: 19px; line-height: 28px; font-weight: 500; color: #000; }
.node b, .node span { display: block; }
.node b { font-weight: 500; color: #000; }
.st { position: absolute; left: 8px; top: 11px; width: 24px; height: 24px; color: #0b8043; }
.exp { position: absolute; right: 14px; top: 20px; width: 20px; height: 14px; }
.link { position: relative; flex: none; width: 6px; height: 78px; background: #8f8f8f; }
.link::before { content: ""; position: absolute; left: -6px; top: 0; width: 18px; height: 9px; border-radius: 0 0 9px 9px; background: #8f8f8f; }
.sbar { flex: none; background: #c8c8c8; border-top: 1px solid #a8a8a8; }
.graphwrap .sbar { width: 15px; height: 605px; }
.logs { flex: none; display: flex; align-items: center; height: 72px; padding: 0 28px 0 36px; border-top: 1px solid #dadce0; }
.logs h2 { width: 207px; }
.show { gap: 2px; margin-right: 47px; }
.show svg { width: 22px; height: 20px; }
.warn { display: flex; align-items: center; gap: 7px; color: #3367d6; }
.show, .warn { padding-top: 3px; }
.warn svg { width: 22px; height: 20px; }
.up { margin-left: auto; }
.up svg { width: 20px; height: 20px; }

.panel { display: flex; flex-direction: column; min-height: 0; border-left: 1px solid #dadce0; }
.phead { flex: none; display: flex; align-items: center; justify-content: space-between; height: 74px; padding: 0 28px 2px 36px; border-bottom: 1px solid #dadce0; color: #000; }
.phead button { color: #3367d6; }
.phead svg { width: 20px; height: 20px; }
.pbody { position: relative; flex: 1; min-height: 0; display: flex; overflow: hidden; }
.pbody .sbar { width: 14px; height: 815px; margin-top: 1px; }
.grip { position: absolute; left: 4px; top: 579px; width: 4px; height: 34px; border-radius: 2px; background: #80868b; }
.pcontent { flex: 1; min-width: 0; padding: 35px 45px 0 36px; }
table { width: 100%; border-collapse: collapse; table-layout: fixed; border-top: 1px solid #dadce0; }
table.fn { border-top-color: #bdbdbd; margin-top: -1px; }
th, td { padding: 3px 20px 2px 0; text-align: left; vertical-align: top; border-bottom: 1px solid #dadce0; font-size: 19px; line-height: 30px; }
th { width: 246px; font-weight: 500; }
td { color: #757575; }
.fn th { width: 163px; }
.fn td { padding-right: 0; color: #202124; white-space: nowrap; }
.q { width: 25px; height: 25px; fill: #000; }
th .q { display: inline-block; vertical-align: -6px; }
.pcontent h2 { margin: 42px 0 12px; font-weight: 500; color: #202124; }
.card { height: 286px; padding-top: 28px; border-radius: 8px; box-shadow: 0 2px 3px rgba(0, 0, 0, .3), 0 0 3px rgba(0, 0, 0, .15); }
.cardtop { display: flex; align-items: flex-start; padding: 0 30px 0 44px; }
.metric { width: 474px; }
.metric select { font-size: 22px; }
.metric .caret { right: 73px; }
.metric .q { position: absolute; right: 16px; top: 14px; }
.dots { margin: 3px 0 0 auto; color: #757575; }
.dots svg { width: 36px; height: 36px; }
.chart { width: 600px; height: 146px; margin-left: 19px; }
.lbl { font-size: 16px; fill: #5a5a5a; }
.legend { display: flex; align-items: center; gap: 8px; padding-left: 29px; height: 50px; color: #202124; font-size: 19px; }
.legend svg { width: 34px; height: 14px; margin-right: 7px; }
.pcontent p { margin: 2px 0 5px; color: #202124; }

/* windows taskbar */
.taskbar { flex: none; display: flex; align-items: center; height: 72px; border-top: 2px solid #bdbdbd; background: #eee; font-family: "Open Sans", "Noto Sans", sans-serif; font-size: 18px; line-height: 24px; color: #1b1b1b; }
.weather { flex: 0 0 419px; display: flex; gap: 7px; padding: 0 0 2px 30px; }
.wicon { position: relative; width: 38px; padding-top: 16px; }
.wicon svg { width: 38px; height: 26px; }
.wtext { display: flex; flex-direction: column; }
.wtext .sub { color: #5f5f5f; }
.apps { display: flex; align-items: center; }
.app-i { position: relative; flex: none; width: 66px; height: 60px; }
.app-i svg { width: 36px; height: 36px; }
.badge { position: absolute; right: 7px; top: 4px; width: 24px; height: 24px; border-radius: 50%; color: #fff; font-weight: 400; font-size: 16px; line-height: 24px; text-align: center; }
.wicon .badge { right: -1px; top: -4px; }
.red { background: #c42b1c; }
.pink { background: #c30052; }
.run::after, .active::after { content: ""; position: absolute; left: 29px; bottom: 3px; width: 9px; height: 5px; border-radius: 3px; background: #8a8a8a; }
.active { width: 56px; height: 58px; margin: 0 5px; border-radius: 6px; background: #f8f8f8; box-shadow: 0 1px 2px rgba(0, 0, 0, .25); }
.active::after { left: 16px; bottom: 1px; width: 24px; background: #c30052; }
.jbadge { position: absolute; right: 10px; top: 11px; width: 18px; height: 18px; border-radius: 50%; background: #ab47bc; color: #fff; font-weight: 400; font-size: 12px; line-height: 18px; }
.new { position: absolute; left: 26px; bottom: 12px; width: 25px; border-radius: 2px; background: #22e0dd; font-size: 10px; line-height: 11px; }
.tsearch { display: flex; align-items: center; width: 326px; height: 47px; margin: 0 5px 0 7px; padding: 0 4px 0 15px; border: 2px solid #ddd; border-radius: 24px; background: #fafafa; }
.tsearch svg { width: 24px; height: 24px; }
.tsearch input { flex: 1; min-width: 0; margin-left: 13px; border: 0; outline: 0; background: none; font: inherit; padding: 0; }
.tsearch input::placeholder { color: #5f5f5f; opacity: 1; }
.tsearch .city { width: 72px; height: 38px; }
.tray { flex: 1; display: flex; align-items: center; justify-content: flex-end; gap: 24px; padding-right: 30px; }
.tray svg { width: 24px; height: 24px; }
.net { display: flex; gap: 12px; margin-right: -12px; }
.clock { width: 108px; padding-bottom: 2px; text-align: right; }
.clock span { display: block; }
.tray .bell { margin-left: -14px; }
```
